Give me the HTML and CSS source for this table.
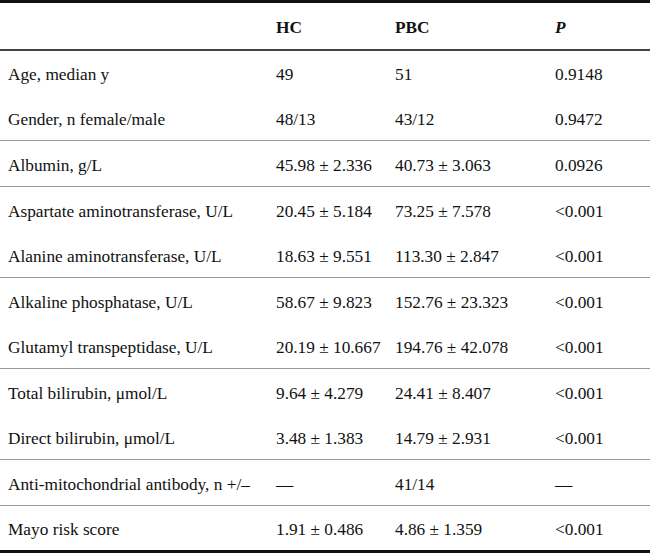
FILE: index.html
```html
<!DOCTYPE html>
<html>
<head>
<meta charset="utf-8">
<link rel="stylesheet" href="styles.css">
</head>
<body>
<table class="data">
  <colgroup>
    <col class="c-label"><col class="c-hc"><col class="c-pbc"><col class="c-p">
  </colgroup>
  <thead>
    <tr><th></th><th>HC</th><th>PBC</th><th><i>P</i></th></tr>
  </thead>
  <tbody>
    <tr><td>Age, median y</td><td>49</td><td>51</td><td>0.9148</td></tr>
    <tr><td>Gender, n female/male</td><td>48/13</td><td>43/12</td><td>0.9472</td></tr>
    <tr class="sep"><td>Albumin, g/L</td><td>45.98 ± 2.336</td><td>40.73 ± 3.063</td><td>0.0926</td></tr>
    <tr class="sep"><td>Aspartate aminotransferase, U/L</td><td>20.45 ± 5.184</td><td>73.25 ± 7.578</td><td>&lt;0.001</td></tr>
    <tr><td>Alanine aminotransferase, U/L</td><td>18.63 ± 9.551</td><td>113.30 ± 2.847</td><td>&lt;0.001</td></tr>
    <tr class="sep"><td>Alkaline phosphatase, U/L</td><td>58.67 ± 9.823</td><td>152.76 ± 23.323</td><td>&lt;0.001</td></tr>
    <tr><td>Glutamyl transpeptidase, U/L</td><td>20.19 ± 10.667</td><td>194.76 ± 42.078</td><td>&lt;0.001</td></tr>
    <tr class="sep"><td>Total bilirubin, μmol/L</td><td>9.64 ± 4.279</td><td>24.41 ± 8.407</td><td>&lt;0.001</td></tr>
    <tr><td>Direct bilirubin, μmol/L</td><td>3.48 ± 1.383</td><td>14.79 ± 2.931</td><td>&lt;0.001</td></tr>
    <tr class="sep"><td>Anti-mitochondrial antibody, n +/–</td><td>—</td><td>41/14</td><td>—</td></tr>
    <tr class="sep"><td>Mayo risk score</td><td>1.91 ± 0.486</td><td>4.86 ± 1.359</td><td>&lt;0.001</td></tr>
  </tbody>
</table>
</body>
</html>
```
FILE: styles.css
```css
html, body {
  margin: 0;
  padding: 0;
  background: #fff;
}
body {
  font-family: "Liberation Serif", "Times New Roman", Tinos, serif;
  font-size: 17.3px;
  color: #111;
}
.data {
  width: 650px;
  border-collapse: collapse;
  border-top: 3px solid #111;
  border-bottom: 3px solid #111;
  table-layout: fixed;
}
.c-label { width: 268px; }
.c-hc { width: 119px; }
.c-pbc { width: 160px; }
.c-p { width: 103px; }
.data th, .data td {
  box-sizing: border-box;
  padding: 0 0 0 8px;
  text-align: left;
  vertical-align: middle;
  white-space: nowrap;
}
.data th {
  height: 48px;
  padding-top: 5px;
  font-weight: bold;
  border-bottom: 2px solid #444;
}
.data td {
  height: 45.6px;
  padding-top: 5px;
}
.data tr.sep td {
  border-top: 1px solid #999;
}
```
